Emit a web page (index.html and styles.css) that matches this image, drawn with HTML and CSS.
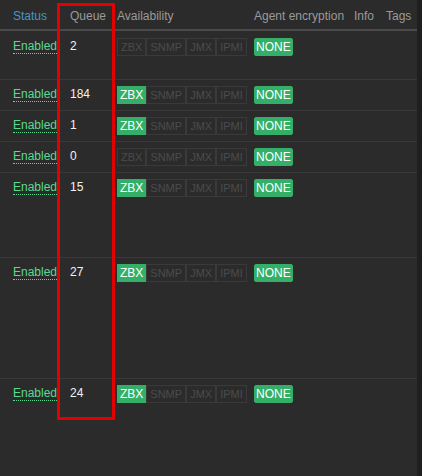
FILE: index.html
```html
<!DOCTYPE html>
<html lang="en">
<head>
  <meta charset="UTF-8">
  <title>Hosts</title>
  <link rel="stylesheet" href="styles.css">
</head>
<body>
  <div class="list">
    <!-- Header -->
    <div class="row head">
      <div class="cell c-status sorted">Status</div>
      <div class="cell c-queue">Queue</div>
      <div class="cell c-avail">Availability</div>
      <div class="cell c-enc">Agent encryption</div>
      <div class="cell c-info">Info</div>
      <div class="cell c-tags">Tags</div>
    </div>

    <div class="row h49">
      <div class="cell c-status"><span class="enabled">Enabled</span></div>
      <div class="cell c-queue num">2</div>
      <div class="cell c-avail"><span class="tag">ZBX</span><span class="tag">SNMP</span><span class="tag">JMX</span><span class="tag">IPMI</span></div>
      <div class="cell c-enc"><span class="tag on">NONE</span></div>
    </div>

    <div class="row h31">
      <div class="cell c-status"><span class="enabled">Enabled</span></div>
      <div class="cell c-queue num">184</div>
      <div class="cell c-avail"><span class="tag on">ZBX</span><span class="tag">SNMP</span><span class="tag">JMX</span><span class="tag">IPMI</span></div>
      <div class="cell c-enc"><span class="tag on">NONE</span></div>
    </div>

    <div class="row h31">
      <div class="cell c-status"><span class="enabled">Enabled</span></div>
      <div class="cell c-queue num">1</div>
      <div class="cell c-avail"><span class="tag on">ZBX</span><span class="tag">SNMP</span><span class="tag">JMX</span><span class="tag">IPMI</span></div>
      <div class="cell c-enc"><span class="tag on">NONE</span></div>
    </div>

    <div class="row h31">
      <div class="cell c-status"><span class="enabled">Enabled</span></div>
      <div class="cell c-queue num">0</div>
      <div class="cell c-avail"><span class="tag">ZBX</span><span class="tag">SNMP</span><span class="tag">JMX</span><span class="tag">IPMI</span></div>
      <div class="cell c-enc"><span class="tag on">NONE</span></div>
    </div>

    <div class="row h85">
      <div class="cell c-status"><span class="enabled">Enabled</span></div>
      <div class="cell c-queue num">15</div>
      <div class="cell c-avail"><span class="tag on">ZBX</span><span class="tag">SNMP</span><span class="tag">JMX</span><span class="tag">IPMI</span></div>
      <div class="cell c-enc"><span class="tag on">NONE</span></div>
    </div>

    <div class="row h121">
      <div class="cell c-status"><span class="enabled">Enabled</span></div>
      <div class="cell c-queue num">27</div>
      <div class="cell c-avail"><span class="tag on">ZBX</span><span class="tag">SNMP</span><span class="tag">JMX</span><span class="tag">IPMI</span></div>
      <div class="cell c-enc"><span class="tag on">NONE</span></div>
    </div>

    <div class="row last">
      <div class="cell c-status"><span class="enabled">Enabled</span></div>
      <div class="cell c-queue num">24</div>
      <div class="cell c-avail"><span class="tag on">ZBX</span><span class="tag">SNMP</span><span class="tag">JMX</span><span class="tag">IPMI</span></div>
      <div class="cell c-enc"><span class="tag on">NONE</span></div>
    </div>

    <!-- highlight around the Queue column -->
    <div class="highlight"></div>
  </div>
</body>
</html>
```

FILE: styles.css
```css
/* Dark theme host list */
body {
  margin: 0;
  background: #1f1f1f;
  font-family: 'Liberation Sans', Arial, sans-serif;
  font-size: 12px;
  color: #f2f2f2;
  height: 476px;
  overflow: hidden;
}

.list {
  position: relative;
  width: 417px;
  height: 476px;
  background: #2b2b2b;
}

.row {
  display: grid;
  grid-template-columns: 57px 58px 137px 99px 31px 35px;
  box-sizing: border-box;
  border-bottom: 1px solid #383838;
}

.row.head {
  height: 31px;
  border-bottom: 2px solid #4a4a4a;
  color: #9a9a9a;
}

.row.head .cell {
  padding-top: 8px;
}

.h49 { height: 49px; }
.h31 { height: 31px; }
.h85 { height: 85px; }
.h121 { height: 121px; }
.row.last { border-bottom: none; }

.cell {
  padding-top: 6px;
  line-height: 16px;
  white-space: nowrap;
}

.h49 .cell { padding-top: 7px; }

.c-status { padding-left: 13px; }
.c-queue { padding-left: 13px; }
.c-avail { padding-left: 2px; }
.c-enc { padding-left: 2px; }
.c-info { padding-left: 3px; }
.c-tags { padding-left: 4px; }

.sorted {
  color: #4796c4;
}

.num {
  color: #f2f2f2;
}

.enabled {
  color: #59db8f;
  border-bottom: 1px dotted #59db8f;
}

/* availability / encryption badges */
.tag {
  display: inline-block;
  padding: 0 3px;
  border: 1px solid #3a3a3a;
  color: #4c4c4c;
  font-size: 11px;
  line-height: 16px;
  vertical-align: top;
}

.tag.on {
  background: #34af67;
  border-color: #34af67;
  color: #fff;
  font-size: 12px;
  padding: 0 2px;
}

.c-enc .tag.on {
  padding: 0 1px;
  border-radius: 2px;
}

.highlight {
  position: absolute;
  left: 57px;
  top: 3px;
  width: 58px;
  height: 417px;
  box-sizing: border-box;
  border: 3px solid #e30000;
}
```
